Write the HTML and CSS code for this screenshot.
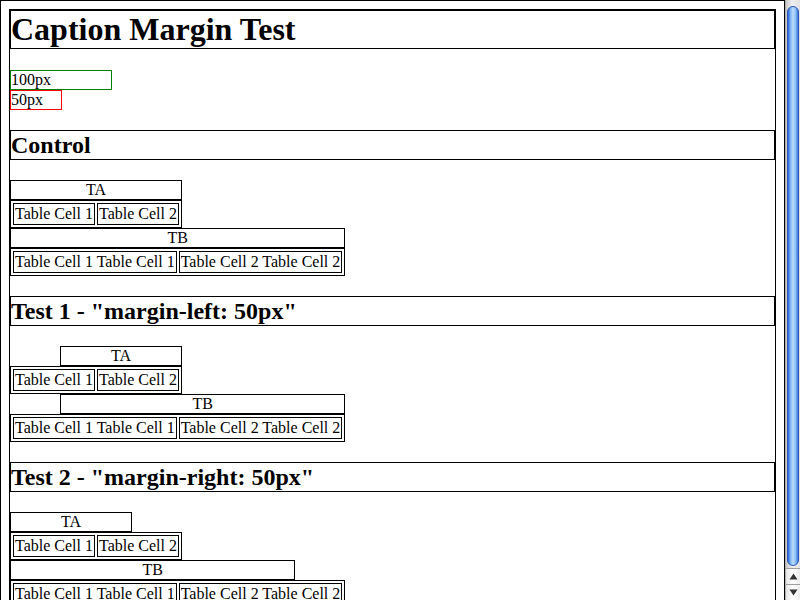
FILE: index.html
```html
<!DOCTYPE html>
<html>
<head>
<meta charset="utf-8">
<title>Caption Margin Test</title>
<link rel="stylesheet" href="styles.css">
</head>
<body>
<div class="window">
  <div class="viewport">
    <div class="root">
      <div class="doc">
        <h1>Caption Margin Test</h1>
        <div class="ruler w100">100px</div>
        <div class="ruler w50">50px</div>

        <h2>Control</h2>
        <table><caption>TA</caption><tr><td>Table Cell 1</td><td>Table Cell 2</td></tr></table>
        <table><caption>TB</caption><tr><td>Table Cell 1 Table Cell 1</td><td>Table Cell 2 Table Cell 2</td></tr></table>

        <h2>Test 1 - "margin-left: 50px"</h2>
        <table class="ml"><caption>TA</caption><tr><td>Table Cell 1</td><td>Table Cell 2</td></tr></table>
        <table class="ml"><caption>TB</caption><tr><td>Table Cell 1 Table Cell 1</td><td>Table Cell 2 Table Cell 2</td></tr></table>

        <h2>Test 2 - "margin-right: 50px"</h2>
        <table class="mr"><caption>TA</caption><tr><td>Table Cell 1</td><td>Table Cell 2</td></tr></table>
        <table class="mr"><caption>TB</caption><tr><td>Table Cell 1 Table Cell 1</td><td>Table Cell 2 Table Cell 2</td></tr></table>
      </div>
    </div>
  </div>
  <div class="scrollbar">
    <div class="track"><div class="thumb"></div></div>
    <div class="btn"><svg width="9" height="7" viewBox="0 0 9 7"><path d="M4.5 0.5 L8.5 6.5 L0.5 6.5 Z" fill="#333"/></svg></div>
    <div class="btn"><svg width="9" height="7" viewBox="0 0 9 7"><path d="M0.5 0.5 L8.5 0.5 L4.5 6.5 Z" fill="#333"/></svg></div>
  </div>
</div>
</body>
</html>
```
FILE: styles.css
```css
html, body {
  margin: 0;
  padding: 0;
  background: #fff;
}
body {
  font-family: "Liberation Serif", "Times New Roman", serif;
  font-size: 16px;
  color: #000;
}
.window {
  display: flex;
  width: 800px;
  height: 600px;
  overflow: hidden;
}
.viewport {
  width: 785px;
  height: 600px;
  overflow: hidden;
  flex: none;
}
.root {
  border: 1px solid #000;
  min-height: 640px;
}
.doc {
  margin: 8px;
  border: 1px solid #000;
}
h1 {
  font-size: 32px;
  line-height: 37px;
  font-weight: bold;
  margin: 0 0 0.67em;
  border: 1px solid #000;
}
h2 {
  font-size: 24px;
  line-height: 28px;
  font-weight: bold;
  margin: 0.83em 0;
  border: 1px solid #000;
}
.ruler {
  height: 18px;
  line-height: 18px;
}
.w100 {
  width: 100px;
  border: 1px solid #008000;
}
.w50 {
  width: 50px;
  border: 1px solid #f00;
}
table {
  border: 1px solid #000;
  border-spacing: 2px;
}
caption {
  border: 1px solid #000;
  line-height: 18px;
}
td {
  border: 1px solid #000;
  padding: 1px;
  line-height: 18px;
}
.ml caption {
  margin-left: 50px;
}
.mr caption {
  margin-right: 50px;
}
.scrollbar {
  width: 15px;
  height: 600px;
  flex: none;
  display: flex;
  flex-direction: column;
  border-left: 1px solid #b0b0b0;
  box-sizing: border-box;
  background: linear-gradient(to right, #c9c9c9, #efefef 45%, #e2e2e2);
}
.track {
  flex: 1;
  padding: 6px 1px 2px 1px;
  display: flex;
  flex-direction: column;
}
.thumb {
  flex: 1;
  border-radius: 6px;
  border: 1px solid #2c56b8;
  background: linear-gradient(to right, #2a62d6, #7fb4f5 25%, #bcdcff 50%, #8cc0f8 75%, #3a72dc);
}
.btn {
  height: 15px;
  display: flex;
  align-items: center;
  justify-content: center;
  border-top: 1px solid #a0a0a0;
  background: linear-gradient(to right, #e4e4e4, #ffffff 50%, #ececec);
}
```
